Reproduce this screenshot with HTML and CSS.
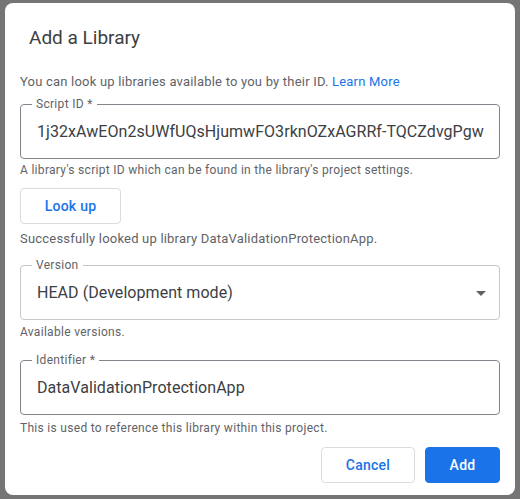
FILE: index.html
```html
<!DOCTYPE html>
<html>
<head>
<meta charset="utf-8">
<link rel="stylesheet" href="styles.css">
</head>
<body>
<div class="dialog">
  <h1 class="title">Add a Library</h1>
  <p class="intro">You can look up libraries available to you by their ID. <a class="link" href="#">Learn More</a></p>

  <fieldset class="field field-dark">
    <legend class="legend">Script ID *</legend>
    <div class="value">1j32xAwEOn2sUWfUQsHjumwFO3rknOZxAGRRf-TQCZdvgPgw</div>
  </fieldset>
  <p class="hint hint-first">A library's script ID which can be found in the library's project settings.</p>

  <button class="btn btn-outline btn-lookup" type="button">Look up</button>
  <p class="status">Successfully looked up library DataValidationProtectionApp.</p>

  <fieldset class="field field-light">
    <legend class="legend">Version</legend>
    <div class="value select-row">
      <span>HEAD (Development mode)</span>
      <svg class="caret" width="10" height="5" viewBox="0 0 10 5"><path d="M0 0h10L5 5z" fill="#5f6368"/></svg>
    </div>
  </fieldset>
  <p class="hint hint-version">Available versions.</p>

  <fieldset class="field field-dark field-ident">
    <legend class="legend">Identifier *</legend>
    <div class="value">DataValidationProtectionApp</div>
  </fieldset>
  <p class="hint hint-last">This is used to reference this library within this project.</p>

  <div class="actions">
    <button class="btn btn-outline btn-cancel" type="button">Cancel</button>
    <button class="btn btn-primary" type="button">Add</button>
  </div>
</div>
</body>
</html>
```

FILE: styles.css
```css
* { box-sizing: border-box; }
html, body { margin: 0; padding: 0; }
body {
  background: #757575;
  padding: 3px 5px 0;
  font-family: Roboto, "Liberation Sans", Arial, sans-serif;
  height: 499px;
  overflow: hidden;
}
.dialog {
  width: 510px;
  height: 492px;
  background: #fff;
  border-radius: 8px;
  padding: 0 15px;
  display: flex;
  flex-direction: column;
  align-items: flex-start;
}
.title {
  margin: 23px 0 0 9px;
  font-size: 19px;
  font-weight: 400;
  line-height: 24px;
  color: #3c4043;
}
.intro {
  margin: 22px 0 0;
  font-size: 13px;
  line-height: 20px;
  letter-spacing: 0.2px;
  color: #5f6368;
}
.link { color: #1a73e8; text-decoration: none; }
.field {
  width: 480px;
  margin: 4px 0 0;
  padding: 8px 16px 14px;
  border: 1px solid #80868b;
  border-radius: 4px;
  min-width: 0;
}
.field-light { border-color: #c4c7c5; margin-top: 8px; }
.field-ident { margin-top: 12px; }
.legend {
  margin-left: -5px;
  padding: 0 4px;
  font-size: 12px;
  line-height: 16px;
  letter-spacing: 0.3px;
  color: #5f6368;
}
.value {
  font-size: 16px;
  line-height: 24px;
  letter-spacing: 0.05px;
  color: #3c4043;
  white-space: nowrap;
}
.select-row {
  display: flex;
  align-items: center;
  justify-content: space-between;
}
.caret { margin-right: -3px; }
.hint {
  margin: 3px 0 0;
  font-size: 12px;
  line-height: 16px;
  letter-spacing: 0.3px;
  color: #5f6368;
}
.hint-version { margin-top: 4px; }
.hint-last { margin-top: 5px; }
.status {
  margin: 5px 0 0;
  font-size: 13px;
  line-height: 20px;
  letter-spacing: 0.2px;
  color: #5f6368;
}
.btn {
  height: 36px;
  padding: 0 24px;
  border-radius: 4px;
  font-family: Roboto, "Liberation Sans", Arial, sans-serif;
  font-size: 14px;
  font-weight: 500;
  letter-spacing: 0.25px;
  cursor: pointer;
}
.btn-outline {
  background: #fff;
  border: 1px solid #dadce0;
  color: #1a73e8;
}
.btn-lookup { width: 101px; margin-top: 10px; padding: 0; }
.btn-cancel { width: 94px; padding: 0; }
.btn-primary {
  width: 75px;
  padding: 0;
  background: #1a73e8;
  border: 1px solid #1a73e8;
  color: #fff;
}
.actions {
  align-self: stretch;
  margin-top: 11px;
  display: flex;
  justify-content: flex-end;
  gap: 10px;
}
```
